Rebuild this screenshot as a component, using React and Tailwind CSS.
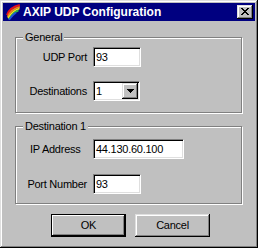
import React from "react";

const sunken =
  "bg-white border border-t-[#808080] border-l-[#808080] border-b-white border-r-white shadow-[inset_1px_1px_0_#000,inset_-1px_-1px_0_#dfdfdf]";
const raised =
  "bg-[#c0c0c0] shadow-[inset_-1px_-1px_0_#000,inset_1px_1px_0_#dfdfdf,inset_-2px_-2px_0_#808080,inset_2px_2px_0_#fff]";

function Feather() {
  return (
    <svg width="16" height="16" viewBox="0 0 16 16" fill="none">
      <path d="M3 11 Q6 3 15.8 1" stroke="#e8101a" strokeWidth="2" />
      <path d="M3.6 12.8 Q7.2 4.8 15.8 2.8" stroke="#f57c18" strokeWidth="1.8" />
      <path d="M4.2 14.2 Q8.4 6.5 15.5 4.5" stroke="#f4e81c" strokeWidth="1.8" />
      <path d="M4.8 15.2 Q9.5 8.2 14.5 6.3" stroke="#2fb548" strokeWidth="1.8" />
      <path d="M5 15.8 Q8.2 11 12 8.4" stroke="#1f4fd8" strokeWidth="1.8" />
    </svg>
  );
}

function CloseX() {
  return (
    <svg width="8" height="7" viewBox="0 0 8 7" shapeRendering="crispEdges">
      <path
        fill="#000"
        d="M0 0h2v1H0zM6 0h2v1H6zM1 1h2v1H1zM5 1h2v1H5zM2 2h4v1H2zM3 3h2v1H3zM2 4h4v1H2zM1 5h2v1H1zM5 5h2v1H5zM0 6h2v1H0zM6 6h2v1H6z"
      />
    </svg>
  );
}

function Group({ title, height, children }) {
  return (
    <div
      className={`relative w-[227px] ${height} border border-[#808080] shadow-[inset_1px_1px_0_#fff,1px_1px_0_#fff]`}
    >
      <div className="absolute top-[-7px] left-[7px] px-[2px] bg-[#c0c0c0] text-[11px] leading-[13px] tracking-[-0.25px] whitespace-nowrap text-black">
        {title}
      </div>
      {children}
    </div>
  );
}

function Field({ value, width }) {
  return (
    <div className={`${sunken} ${width} h-[20px] flex items-center pl-[2px] text-[11px] leading-[13px] text-black`}>
      {value}
    </div>
  );
}

function Label({ children, left }) {
  return (
    <div className={`w-[58px] flex whitespace-nowrap ${left ? "justify-start pl-[1px]" : "justify-end"}`}>
      <span>{children}</span>
    </div>
  );
}

export default function App() {
  return (
    <div className="w-[258px] h-[248px] bg-[#c0c0c0] p-[3px] flex flex-col font-['Liberation_Sans',Arial,sans-serif] shadow-[inset_-1px_-1px_0_#000,inset_1px_1px_0_#dfdfdf,inset_-2px_-2px_0_#808080,inset_2px_2px_0_#fff]">
      <div className="h-[18px] bg-[#000080] flex items-center pl-[1px] pr-[2px]">
        <Feather />
        <div className="ml-[3px] text-[12px] leading-[14px] font-bold text-white whitespace-nowrap">
          AXIP UDP Configuration
        </div>
        <div className={`ml-auto w-[16px] h-[14px] ${raised} flex items-center justify-center pb-[1px] pr-[1px]`}>
          <CloseX />
        </div>
      </div>

      <div className="pl-[12px] pt-[16px] flex flex-col">
        <Group title="General" height="h-[76px]">
          <div className="pl-[13px] pt-[9px] flex flex-col text-[11px] leading-[13px] tracking-[-0.25px] text-black">
            <div className="flex items-center">
              <Label>UDP Port</Label>
              <div className="ml-[6px]">
                <Field value="93" width="w-[48px]" />
              </div>
            </div>
            <div className="flex items-center mt-[14px]">
              <Label>Destinations</Label>
              <div className={`ml-[6px] ${sunken} w-[47px] h-[20px] flex items-stretch p-px`}>
                <div className="flex-1 flex items-center pl-[1px]">1</div>
                <div className={`w-[16px] ${raised} flex items-center justify-center`}>
                  <svg width="7" height="4" viewBox="0 0 7 4" shapeRendering="crispEdges">
                    <path d="M0 0h7v1H0zM1 1h5v1H1zM2 2h3v1H2zM3 3h1v1H3z" fill="#000" />
                  </svg>
                </div>
              </div>
            </div>
          </div>
        </Group>

        <div className="mt-[13px]">
          <Group title="Destination 1" height="h-[78px]">
            <div className="pl-[13px] pt-[12px] flex flex-col text-[11px] leading-[13px] tracking-[-0.25px] text-black">
              <div className="flex items-center">
                <Label left>IP Address</Label>
                <div className="ml-[6px]">
                  <Field value="44.130.60.100" width="w-[91px]" />
                </div>
              </div>
              <div className="flex items-center mt-[15px]">
                <Label>Port Number</Label>
                <div className="ml-[6px]">
                  <Field value="93" width="w-[48px]" />
                </div>
              </div>
            </div>
          </Group>
        </div>

        <div className="flex mt-[10px] pl-[36px] gap-[9px] text-[11px] leading-[13px] tracking-[-0.25px] text-black">
          <div className="w-[75px] h-[23px] border border-black bg-[#c0c0c0] shadow-[inset_-1px_-1px_0_#000,inset_1px_1px_0_#fff,inset_-2px_-2px_0_#808080] flex items-center justify-center">
            OK
          </div>
          <div className={`w-[75px] h-[23px] ${raised} flex items-center justify-center`}>
            Cancel
          </div>
        </div>
      </div>
    </div>
  );
}
